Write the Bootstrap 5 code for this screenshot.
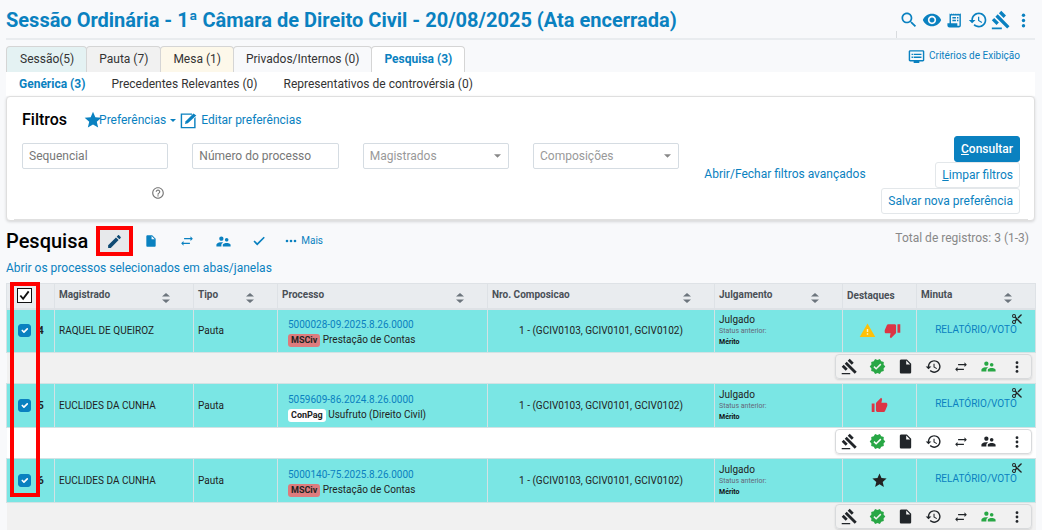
<!DOCTYPE html>
<html lang="pt-BR">
<head>
<meta charset="utf-8">
<meta name="viewport" content="width=device-width, initial-scale=1">
<title>Sessão Ordinária</title>
<link rel="stylesheet" href="https://cdn.jsdelivr.net/npm/bootstrap@5.3.0/dist/css/bootstrap.min.css">
<style>
body{font-family:Roboto,"Liberation Sans",sans-serif;font-size:12px;line-height:16px;background:#f8f9fb;color:#333}
a,.tool{color:#0a81c0;text-decoration:none}
.ico{width:17px;height:17px;fill:currentColor;flex:none;display:block}
.ico-lg{width:20px;height:20px}
.ico-md{width:14px;height:14px}
.ico-sm{width:12px;height:12px}
.tool{border:0;background:none;padding:0;display:flex;align-items:center;justify-content:center}
.page{padding:0 7px 0 6px}
.page-head{height:40px;border-bottom:2px solid #e9ecef}
.page-head h1{font-size:20px;line-height:24px;font-weight:700;color:#0a81c0;margin:8px 0 0}
.head-tools{padding-top:10px}
.head-tools .tool{width:23px;height:20px}
.head-sep{width:1px;height:7px;background:#d9dcdf}
.nav-tabs.sess{--bs-nav-tabs-border-width:0;margin-top:6px}
.sess .nav-link{padding:4px 12px 5px;border:1px solid #d5d5d5;border-bottom:0;border-radius:4px 4px 0 0;color:#333;line-height:16px;margin:0}
.sess .nav-item + .nav-item{margin-left:-1px}
.sess .nav-item:first-child .nav-link{padding-left:13px}
.sess .nav-link.active{color:#0a81c0;background:#fff;font-weight:700;border-color:#d5d5d5}
.sess .t-sess{background:#e4f2f3}.sess .t-pauta{background:#f1f1f1}.sess .t-mesa{background:#fdf8ea}
.criteria{font-size:10px;margin-right:15px;gap:4px}
.subnav{background:#fff;height:24px}
.subnav a{color:#333;padding:4px 13px}
.subnav a.on{color:#0a81c0;font-weight:700}
.filters{border:1px solid #dfdfdf;border-radius:4px;box-shadow:0 1px 3px rgba(0,0,0,.14);padding:12px 14px 0 15px;height:125px}
.filters h2{font-size:16px;line-height:22px;font-weight:500;color:#000;margin:0}
.filters .form-control,.filters .form-select{height:26px;font-size:12px;line-height:16px;padding:0 6px;border:1px solid #d5dce2;border-radius:2px;color:#999;background-color:#fff}
.filters .form-control::placeholder{color:#777}
.filters .form-select{background-image:url("data:image/svg+xml,%3Csvg xmlns='http://www.w3.org/2000/svg' viewBox='0 0 8 4'%3E%3Cpath fill='%23888' d='M0 0h8L4 4z'/%3E%3C/svg%3E");background-size:7px 4px;background-position:right 7px center}
.help{color:#777;margin:17px 3px 0 auto}
.pref-label{margin-left:-4px}
.caret{width:6px;height:3px;fill:currentColor}
.act{font-size:12px;line-height:16px;padding:4px 6px;border-radius:3px;border:1px solid #e3e7ea;color:#0a81c0;background:#fff;white-space:nowrap}
.act.btn-primary{background:#0a81c0;border-color:#0a81c0;color:#fff;font-weight:500}
.adv{margin:23px 0 0 1px;white-space:nowrap}
.act-col{padding-top:5px}
.inner-line{border-top:1px solid #e0e0e0;margin:5px -8px 0}
.results{padding-top:5px}
.results h2{font-size:20px;line-height:28px;font-weight:500;color:#000;margin:0}
.results .tool{width:36px;height:30px}
.total{color:#888;margin:0 6px 6px auto}
.results .tool.picked{width:37px;background:#e7e9eb;color:#0f4a73;outline:4px solid #f00;outline-offset:-4px}
.open-all{margin:4px 0 7px}
.list{table-layout:fixed;width:100%;font-size:10px;line-height:15px;margin:0;border-collapse:collapse}
.c1{width:48px}.c2{width:139px}.c3{width:84px}.c4{width:210px}.c5{width:227px}.c6{width:128px}.c7{width:74px}.c8{width:119px}
.list th{height:25px;background:#e9ecef;color:#495057;font-weight:700;padding:0 4px;border:1px solid #dee2e6;border-bottom:2px solid #dee2e6}
.list th .ico{width:8px;height:12px;fill:#6c757d;margin:5px 19px 0 auto}
.rec td{height:44px;background:#7ae6e4;padding:0 4px;border:1px solid #d3e2e4;color:#222;vertical-align:middle}
.proc{padding:3px 0 0 6px}
.bdg{font-size:9px;line-height:13px;font-weight:700;padding:0 3px;border-radius:3px;color:#222;background:#fff;display:inline-block}
.bdg.ms{background:#dd7b7d}
.tiny{font-size:7px;line-height:11px;color:#667}
.jul{line-height:13px}
.tiny.strong-t{color:#111;font-weight:700}
.ops-row td{height:31px;padding:1px 4px 0;background:#fff;vertical-align:top}
.ops-row.alt td{background:#f1f1f1}
.ops-row.last td{height:27px}
.ops{width:197px;height:25px;margin-left:auto;border:1px solid #d8dadc;border-radius:4px;box-shadow:0 1px 2px rgba(0,0,0,.12)}
.ops .tool{flex:1;color:#212529}
.ops .green{color:#28a745}
.red{color:#dc3545}.amber{color:#ffc107}
.cut{color:#222;margin:3px 8px -3px auto}
.pick-all{appearance:none;width:15px;height:15px;border:1px solid #111;margin:0 0 0 6px;display:block;background:#fff url("data:image/svg+xml,%3Csvg xmlns='http://www.w3.org/2000/svg' viewBox='0 0 14 14'%3E%3Cpath fill='none' stroke='%23111' stroke-width='2' d='M2.5 7l3 3.5 6-8'/%3E%3C/svg%3E")}
.rec .form-check-input{width:13px;height:13px;border-radius:3px;margin:0 7px 0 7px;background-color:#0a81c0;border-color:#0a81c0;flex:none}
/* red frame drawn over the selection column */
.frame{position:absolute;left:4px;top:-1px;width:30px;height:215px;border:4px solid #f00;pointer-events:none}
</style>
</head>
<body>
<svg class="d-none" aria-hidden="true">
<symbol id="search" viewBox="0 0 24 24"><path d="M15.5 14h-.79l-.28-.27C15.41 12.59 16 11.11 16 9.5 16 5.91 13.09 3 9.5 3S3 5.91 3 9.5 5.91 16 9.5 16c1.61 0 3.09-.59 4.23-1.57l.27.28v.79l5 4.99L20.49 19l-4.99-5zm-6 0C7.01 14 5 11.99 5 9.5S7.01 5 9.5 5 14 7.01 14 9.5 11.99 14 9.5 14z"/></symbol>
<symbol id="eye" viewBox="0 0 24 24"><path d="M12 4.5C7 4.5 2.73 7.61 1 12c1.73 4.39 6 7.5 11 7.5s9.27-3.11 11-7.5c-1.73-4.39-6-7.5-11-7.5zM12 17c-2.76 0-5-2.24-5-5s2.24-5 5-5 5 2.24 5 5-2.24 5-5 5zm0-8c-1.66 0-3 1.34-3 3s1.34 3 3 3 3-1.34 3-3-1.34-3-3-3z"/></symbol>
<symbol id="receipt" viewBox="0 0 24 24"><path fill-rule="evenodd" d="M5 2l1.500 1L8 2l1.500 1L11 2l1.500 1L14 2l1.500 1L17 2l1.500 1L20 2l1 .5V19a3 3 0 0 1-3 3H5a3 3 0 0 1-3-3v-3h3zM7 5v11h9v3.500h3V5zM9 7h5v2H9zM15.500 7h2v2h-2zM9 11h5v2H9zM15.500 11h2v2h-2z"/></symbol>
<symbol id="history" viewBox="0 0 24 24"><path d="M13 3c-4.970 0-9 4.030-9 9H1l3.890 3.890.07.14L9 12H6c0-3.870 3.130-7 7-7s7 3.130 7 7-3.130 7-7 7c-1.930 0-3.680-.79-4.940-2.060l-1.420 1.420C8.270 19.990 10.510 21 13 21c4.970 0 9-4.030 9-9s-4.030-9-9-9zm-1 5v5l4.280 2.540.72-1.210-3.500-2.080V8H12z"/></symbol>
<symbol id="gavel" viewBox="0 0 24 24"><path d="M1 21h12v2H1zM5.245 8.070l2.830-2.827 14.140 14.142-2.828 2.828zM12.317 1l5.657 5.656-2.830 2.830-5.654-5.660zM3.825 9.485l5.657 5.657-2.828 2.828-5.657-5.657z"/></symbol>
<symbol id="dots" viewBox="0 0 24 24"><circle cx="12" cy="4.500" r="2.400"/><circle cx="12" cy="12" r="2.400"/><circle cx="12" cy="19.500" r="2.400"/></symbol>
<symbol id="hdots" viewBox="0 0 24 24"><circle cx="4" cy="12" r="2.600"/><circle cx="12" cy="12" r="2.600"/><circle cx="20" cy="12" r="2.600"/></symbol>
<symbol id="verified" viewBox="0 0 24 24"><path d="M23 12l-2.440-2.790.34-3.690-3.610-.82-1.890-3.200L12 2.960 8.600 1.500 6.710 4.690 3.100 5.500l.34 3.700L1 12l2.440 2.790-.34 3.700 3.610.82L8.600 22.500l3.400-1.470 3.400 1.460 1.890-3.190 3.610-.82-.34-3.690L23 12zm-12.910 4.720l-3.800-3.810 1.480-1.480 2.320 2.330 5.850-5.870 1.480 1.480-7.330 7.350z"/></symbol>
<symbol id="file" viewBox="0 0 24 24"><path d="M6 2c-1.100 0-2 .9-2 2v16c0 1.100.89 2 2 2h12c1.100 0 2-.9 2-2V8l-6-6H6zm7 7V3.500L18.500 9H13z"/></symbol>
<symbol id="swap" viewBox="0 0 24 24"><path d="M22 8l-4-4v3H7v2h11v3zM2 16l4 4v-3h11v-2H6v-3z"/></symbol>
<symbol id="people" viewBox="0 0 24 24"><path d="M16.500 12c1.380 0 2.490-1.120 2.490-2.500S17.880 7 16.500 7C15.120 7 14 8.120 14 9.500s1.120 2.500 2.500 2.500zM9 11c1.660 0 2.990-1.340 2.990-3S10.660 5 9 5C7.340 5 6 6.340 6 8s1.340 3 3 3zm7.500 3c-1.830 0-5.500.92-5.500 2.750V19h11v-2.250c0-1.830-3.670-2.750-5.500-2.750zM9 13c-2.330 0-7 1.170-7 3.500V19h7v-2.250c0-.85.33-2.340 2.370-3.470C10.500 13.100 9.660 13 9 13z"/></symbol>
<symbol id="up" viewBox="0 0 24 24"><path d="M1 21h4V9H1v12zm22-11c0-1.100-.9-2-2-2h-6.310l.95-4.570.03-.32c0-.41-.17-.79-.44-1.060L14.170 1 7.590 7.590C7.220 7.950 7 8.450 7 9v10c0 1.100.9 2 2 2h9c.83 0 1.540-.5 1.840-1.220l3.020-7.050c.09-.23.14-.47.14-.73v-2z"/></symbol>
<symbol id="down" viewBox="0 0 24 24"><path d="M15 3H6c-.83 0-1.540.5-1.840 1.220l-3.020 7.050c-.09.23-.14.47-.14.73v2c0 1.100.9 2 2 2h6.310l-.95 4.570-.03.32c0 .41.17.79.44 1.060L9.830 23l6.590-6.590c.36-.36.58-.86.58-1.410V5c0-1.100-.9-2-2-2zm4 0v12h4V3h-4z"/></symbol>
<symbol id="warn" viewBox="0 0 24 24"><path d="M1 21h22L12 2z"/><path fill="#fff3c4" d="M13 18h-2v-2h2zm0-4h-2v-4h2z"/></symbol>
<symbol id="star" viewBox="0 0 24 24"><path d="M12 17.270L18.180 21l-1.640-7.030L22 9.240l-7.190-.61L12 2 9.190 8.630 2 9.240l5.460 4.730L5.820 21z"/></symbol>
<symbol id="cut" viewBox="0 0 24 24"><path fill-rule="evenodd" d="M9.640 7.640c.23-.5.36-1.050.36-1.640a4 4 0 1 0-4 4c.59 0 1.140-.13 1.640-.36L10 12l-2.360 2.360A4 4 0 1 0 10 18c0-.59-.13-1.140-.36-1.640L12 14l7 7h3v-1zM6 8a2 2 0 1 1 0-4 2 2 0 0 1 0 4zm0 12a2 2 0 1 1 0-4 2 2 0 0 1 0 4zM19 3l-6 6 2 2 7-7V3z"/></symbol>
<symbol id="edit" viewBox="0 0 24 24"><path d="M3 17.250V21h3.750L17.810 9.940l-3.750-3.750L3 17.250zM20.710 7.040c.39-.39.39-1.020 0-1.410l-2.340-2.340c-.39-.39-1.020-.39-1.410 0l-1.830 1.830 3.750 3.750 1.830-1.830z"/></symbol>
<symbol id="editbox" viewBox="0 0 24 24"><path d="M1 2h16v2H3v17h17V9l2-2v16H1z"/><path d="M7 17l1-4L19 2l4 3L11 16z"/></symbol>
<symbol id="check" viewBox="0 0 24 24"><path d="M9 15.500L4.500 11l-2 2L9 19.500 22 6.500l-2-2z"/></symbol>
<symbol id="help" viewBox="0 0 24 24"><path d="M11 18h2v-2h-2v2zm1-16C6.480 2 2 6.480 2 12s4.480 10 10 10 10-4.480 10-10S17.520 2 12 2zm0 18c-4.410 0-8-3.590-8-8s3.590-8 8-8 8 3.590 8 8-3.590 8-8 8zm0-14c-2.210 0-4 1.790-4 4h2c0-1.100.9-2 2-2s2 .9 2 2c0 2-3 1.750-3 5h2c0-2.250 3-2.500 3-5 0-2.210-1.790-4-4-4z"/></symbol>
<symbol id="dvr" viewBox="0 0 24 24"><path d="M21 3H3c-1.100 0-2 .9-2 2v12c0 1.100.9 2 2 2h5v2h8v-2h5c1.100 0 2-.9 2-2V5c0-1.100-.9-2-2-2zm0 14H3V5h18v12zm-2-9H8v2h11V8zm0 4H8v2h11v-2zM7 8H5v2h2V8zm0 4H5v2h2v-2z"/></symbol>
<symbol id="sort" viewBox="0 0 8 12"><path d="M0 4.500h8L4 1zM0 7.500h8L4 11z"/></symbol>
</svg>

<div class="page">
<header class="page-head d-flex justify-content-between">
<h1 class="text-nowrap">Sessão Ordinária - 1ª Câmara de Direito Civil - 20/08/2025 (Ata encerrada)</h1>
<div class="d-flex">
<span class="head-sep align-self-end"></span>
<div class="head-tools d-flex">
<button class="tool" aria-label="Buscar"><svg class="ico ico-lg"><use href="#search"/></svg></button>
<button class="tool" aria-label="Ver"><svg class="ico ico-lg"><use href="#eye"/></svg></button>
<button class="tool" aria-label="Extrato"><svg class="ico"><use href="#receipt"/></svg></button>
<button class="tool" aria-label="Histórico"><svg class="ico ico-lg"><use href="#history"/></svg></button>
<button class="tool" aria-label="Julgar"><svg class="ico ico-lg"><use href="#gavel"/></svg></button>
<button class="tool" aria-label="Mais opções"><svg class="ico"><use href="#dots"/></svg></button>
</div></div>
</header>

<div class="d-flex justify-content-between">
<ul class="nav nav-tabs sess">
<li class="nav-item"><a class="nav-link t-sess" href="#">Sessão(5)</a></li>
<li class="nav-item"><a class="nav-link t-pauta" href="#">Pauta (7)</a></li>
<li class="nav-item"><a class="nav-link t-mesa" href="#">Mesa (1)</a></li>
<li class="nav-item"><a class="nav-link" href="#">Privados/Internos (0)</a></li>
<li class="nav-item"><a class="nav-link active" href="#">Pesquisa (3)</a></li>
</ul>
<a class="criteria d-flex align-items-center" href="#"><svg class="ico"><use href="#dvr"/></svg>Critérios de Exibição</a>
</div>
<nav class="subnav d-flex align-items-center"><a class="on" href="#">Genérica (3)</a><a href="#">Precedentes Relevantes (0)</a><a href="#">Representativos de controvérsia (0)</a></nav>

<section class="filters bg-white">
<div class="d-flex align-items-center">
<h2>Filtros</h2>
<a class="d-flex align-items-center ms-3" href="#"><svg class="ico ico-lg"><use href="#star"/></svg><span class="text-nowrap pref-label">Preferências</span><svg class="caret ms-1" viewBox="0 0 6 3"><path d="M0 0h6L3 3z"/></svg></a>
<a class="d-flex align-items-center gap-1 ms-1" href="#"><svg class="ico"><use href="#editbox"/></svg>Editar preferências</a>
</div>
<form class="row gx-4">
<div class="col-2 pt-2 mt-1"><input class="form-control" placeholder="Sequencial" aria-label="Sequencial"><svg class="ico ico-md help"><use href="#help"/></svg></div>
<div class="col-2 pt-2 mt-1"><input class="form-control" placeholder="Número do processo" aria-label="Número do processo"></div>
<div class="col-2 pt-2 mt-1"><select class="form-select" aria-label="Magistrados"><option>Magistrados</option></select></div>
<div class="col-2 pt-2 mt-1"><select class="form-select" aria-label="Composições"><option>Composições</option></select></div>
<div class="col-2 pt-2 mt-1"><a class="adv d-block" href="#">Abrir/Fechar filtros avançados</a></div>
<div class="col-2 act-col d-flex flex-column align-items-end">
<button type="button" class="btn btn-primary act"><u>C</u>onsultar</button>
<button type="button" class="btn act"><u>L</u>impar filtros</button>
<button type="button" class="btn act">Salvar nova preferência</button>
</div>
</form>
<div class="inner-line"></div>
</section>

<section class="results d-flex align-items-center">
<h2>Pesquisa</h2>
<div class="d-flex ms-2">
<button class="tool picked" aria-label="Editar"><svg class="ico"><use href="#edit"/></svg></button>
<button class="tool" aria-label="Documento"><svg class="ico ico-md"><use href="#file"/></svg></button>
<button class="tool" aria-label="Trocar"><svg class="ico ico-md"><use href="#swap"/></svg></button>
<button class="tool" aria-label="Pessoas"><svg class="ico"><use href="#people"/></svg></button>
<button class="tool" aria-label="Confirmar"><svg class="ico ico-md"><use href="#check"/></svg></button>
</div>
<a class="criteria d-flex align-items-center ms-2" href="#"><svg class="ico ico-sm"><use href="#hdots"/></svg>Mais</a>
<span class="total">Total de registros: 3 (1-3)</span>
</section>
<a class="d-inline-block open-all" href="#">Abrir os processos selecionados em abas/janelas</a>

<div class="position-relative">
<table class="list">
<colgroup><col class="c1"><col class="c2"><col class="c3"><col class="c4"><col class="c5"><col class="c6"><col class="c7"><col class="c8"></colgroup>
<thead><tr>
<th><input type="checkbox" class="pick-all" checked aria-label="Selecionar todos"></th>
<th><div class="d-flex">Magistrado<svg class="ico"><use href="#sort"/></svg></div></th>
<th><div class="d-flex">Tipo<svg class="ico"><use href="#sort"/></svg></div></th>
<th><div class="d-flex">Processo<svg class="ico"><use href="#sort"/></svg></div></th>
<th><div class="d-flex">Nro. Composicao<svg class="ico"><use href="#sort"/></svg></div></th>
<th><div class="d-flex">Julgamento<svg class="ico"><use href="#sort"/></svg></div></th>
<th>Destaques</th>
<th><div class="d-flex">Minuta<svg class="ico"><use href="#sort"/></svg></div></th>
</tr></thead>
<tbody>
<tr class="rec">
<td><label class="d-flex align-items-center"><input type="checkbox" class="form-check-input" checked><b>4</b></label></td>
<td>RAQUEL DE QUEIROZ</td><td>Pauta</td>
<td><div class="proc"><a href="#">5000028-09.2025.8.26.0000</a><br><span class="bdg ms">MSCiv</span> Prestação de Contas</div></td>
<td class="text-center">1 - (GCIV0103, GCIV0101, GCIV0102)</td>
<td><div class="jul">Julgado</div><div class="tiny">Status anterior:</div><div class="tiny strong-t">Mérito</div></td>
<td><div class="d-flex justify-content-center gap-2"><svg class="ico amber"><use href="#warn"/></svg><svg class="ico red"><use href="#down"/></svg></div></td>
<td class="text-center align-top"><svg class="ico ico-sm cut"><use href="#cut"/></svg><a href="#">RELATÓRIO/VOTO</a></td>
</tr>
<tr class="ops-row alt"><td colspan="8"><div class="ops d-flex">
<button class="tool" aria-label="Julgar"><svg class="ico"><use href="#gavel"/></svg></button><button class="tool green" aria-label="Verificado"><svg class="ico"><use href="#verified"/></svg></button><button class="tool" aria-label="Documento"><svg class="ico"><use href="#file"/></svg></button><button class="tool" aria-label="Histórico"><svg class="ico"><use href="#history"/></svg></button><button class="tool" aria-label="Trocar"><svg class="ico ico-md"><use href="#swap"/></svg></button><button class="tool green" aria-label="Pessoas"><svg class="ico"><use href="#people"/></svg></button><button class="tool" aria-label="Mais"><svg class="ico ico-md"><use href="#dots"/></svg></button>
</div></td></tr>
<tr class="rec">
<td><label class="d-flex align-items-center"><input type="checkbox" class="form-check-input" checked><b>5</b></label></td>
<td>EUCLIDES DA CUNHA</td><td>Pauta</td>
<td><div class="proc"><a href="#">5059609-86.2024.8.26.0000</a><br><span class="bdg">ConPag</span> Usufruto (Direito Civil)</div></td>
<td class="text-center">1 - (GCIV0103, GCIV0101, GCIV0102)</td>
<td><div class="jul">Julgado</div><div class="tiny">Status anterior:</div><div class="tiny strong-t">Mérito</div></td>
<td><svg class="ico red mx-auto"><use href="#up"/></svg></td>
<td class="text-center align-top"><svg class="ico ico-sm cut"><use href="#cut"/></svg><a href="#">RELATÓRIO/VOTO</a></td>
</tr>
<tr class="ops-row"><td colspan="8"><div class="ops d-flex">
<button class="tool" aria-label="Julgar"><svg class="ico"><use href="#gavel"/></svg></button><button class="tool green" aria-label="Verificado"><svg class="ico"><use href="#verified"/></svg></button><button class="tool" aria-label="Documento"><svg class="ico"><use href="#file"/></svg></button><button class="tool" aria-label="Histórico"><svg class="ico"><use href="#history"/></svg></button><button class="tool" aria-label="Trocar"><svg class="ico ico-md"><use href="#swap"/></svg></button><button class="tool" aria-label="Pessoas"><svg class="ico"><use href="#people"/></svg></button><button class="tool" aria-label="Mais"><svg class="ico ico-md"><use href="#dots"/></svg></button>
</div></td></tr>
<tr class="rec">
<td><label class="d-flex align-items-center"><input type="checkbox" class="form-check-input" checked><b>6</b></label></td>
<td>EUCLIDES DA CUNHA</td><td>Pauta</td>
<td><div class="proc"><a href="#">5000140-75.2025.8.26.0000</a><br><span class="bdg ms">MSCiv</span> Prestação de Contas</div></td>
<td class="text-center">1 - (GCIV0103, GCIV0101, GCIV0102)</td>
<td><div class="jul">Julgado</div><div class="tiny">Status anterior:</div><div class="tiny strong-t">Mérito</div></td>
<td><svg class="ico mx-auto"><use href="#star"/></svg></td>
<td class="text-center align-top"><svg class="ico ico-sm cut"><use href="#cut"/></svg><a href="#">RELATÓRIO/VOTO</a></td>
</tr>
<tr class="ops-row alt last"><td colspan="8"><div class="ops d-flex">
<button class="tool" aria-label="Julgar"><svg class="ico"><use href="#gavel"/></svg></button><button class="tool green" aria-label="Verificado"><svg class="ico"><use href="#verified"/></svg></button><button class="tool" aria-label="Documento"><svg class="ico"><use href="#file"/></svg></button><button class="tool" aria-label="Histórico"><svg class="ico"><use href="#history"/></svg></button><button class="tool" aria-label="Trocar"><svg class="ico ico-md"><use href="#swap"/></svg></button><button class="tool green" aria-label="Pessoas"><svg class="ico"><use href="#people"/></svg></button><button class="tool" aria-label="Mais"><svg class="ico ico-md"><use href="#dots"/></svg></button>
</div></td></tr>
</tbody>
</table>
<div class="frame"></div>
</div>
</div>
<script src="https://cdn.jsdelivr.net/npm/bootstrap@5.3.0/dist/js/bootstrap.bundle.min.js"></script>
</body>
</html>
